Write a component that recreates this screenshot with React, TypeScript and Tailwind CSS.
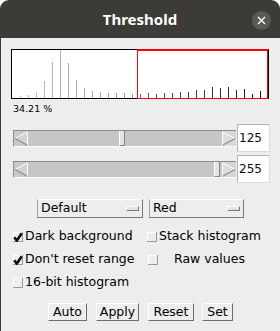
import React from "react";

const FONT = { fontFamily: '"DejaVu Sans", "Liberation Sans", sans-serif' };

const bars: [number, number][] = [
  [20, 96], [28, 95], [36, 92], [44, 81], [52, 62], [60, 50], [68, 63], [76, 80],
  [84, 88], [92, 91], [100, 92], [108, 93], [116, 93], [124, 93], [132, 94],
  [140, 94], [148, 93], [156, 94], [164, 93], [172, 93], [180, 92], [188, 92],
  [196, 90], [204, 90], [212, 87], [220, 88], [228, 87], [236, 90], [244, 89],
  [252, 94], [260, 91],
];

function barColor(x: number) {
  const v = x < 137 ? Math.round(192 - (x - 20) * 0.35) : Math.round(95 - (x - 140) * 0.6);
  return `rgb(${v},${v},${v})`;
}

function Histogram() {
  return (
    <svg width={258} height={50} className="block">
      <rect x={0.5} y={0.5} width={257} height={49} fill="#fff" stroke="#000" />
      {bars.map(([x, top]) => (
        <rect key={x} x={x - 11} y={top - 49} width={1} height={98 - top} fill={barColor(x)} />
      ))}
      <rect x={126.5} y={0.5} width={130} height={49} fill="none" stroke="#ff0000" />
      <line x1={126} y1={1.5} x2={257} y2={1.5} stroke="#ff0000" />
    </svg>
  );
}

function LeftArrow() {
  return (
    <svg width={14} height={15} className="block shrink-0">
      <rect x={0} y={0} width={14} height={15} fill="#c8c8c8" />
      <polygon points="1,7.5 13,1 13,14" fill="#d2d2d2" />
      <line x1={1} y1={7.5} x2={13} y2={1} stroke="#ffffff" />
      <line x1={1} y1={7.5} x2={13} y2={14} stroke="#7c7c7c" />
      <line x1={13.5} y1={1} x2={13.5} y2={14} stroke="#ffffff" />
    </svg>
  );
}

function RightArrow() {
  return (
    <svg width={14} height={15} className="block shrink-0">
      <rect x={0} y={0} width={14} height={15} fill="#d6d6d6" />
      <polygon points="13,7.5 1,1 1,14" fill="#dcdcdc" />
      <line x1={13} y1={7.5} x2={1} y2={1} stroke="#ffffff" />
      <line x1={13} y1={7.5} x2={1} y2={14} stroke="#7c7c7c" />
      <line x1={0.5} y1={1} x2={0.5} y2={14} stroke="#ffffff" />
    </svg>
  );
}

function Slider({ thumb, value }: { thumb: number; value: string }) {
  return (
    <div className="flex items-center h-[28px] ml-[12px]">
      <div className="relative flex w-[223px] h-[17px] bg-[#c6c6c6] border-t border-l border-t-[#8c8c8c] border-l-[#8c8c8c] border-b border-b-white">
        <LeftArrow />
        <div className="flex-1" />
        <RightArrow />
        <div
          className="absolute top-0 w-[6px] h-[15px] bg-[#e4e4e4] border-l border-l-white border-r border-r-[#858585] border-b border-b-[#858585]"
          style={{ left: thumb }}
        />
      </div>
      <div className="ml-[1px] w-[33px] h-[28px] bg-white border border-t-[#b4b4b4] border-l-[#b4b4b4] border-r-[#dcdcdc] border-b-[#dcdcdc] flex items-center pl-[1px] text-[12px] text-[#0a0a28]">
        {value}
      </div>
    </div>
  );
}

function Choice({ label, width }: { label: string; width: number }) {
  return (
    <div
      className="h-[19px] flex items-center justify-between pl-[3px] pr-[3px] border border-t-white border-l-[#a6a6a6] border-b-[#7a7a7a] border-r-[#7a7a7a] text-[12.5px] text-black"
      style={{ width }}
    >
      <span>{label}</span>
      <span className="w-[13px] h-[5px] border border-t-white border-l-white border-b-[#7a7a7a] border-r-[#7a7a7a] bg-[#e2e2e2]" />
    </div>
  );
}

function Box({ checked }: { checked: boolean }) {
  return (
    <svg width={10} height={10} className="block shrink-0">
      <rect x={0} y={0} width={10} height={10} fill="#ededed" />
      <line x1={0.5} y1={0} x2={0.5} y2={10} stroke="#ffffff" />
      <line x1={0} y1={0.5} x2={10} y2={0.5} stroke="#ffffff" />
      <line x1={9.5} y1={0} x2={9.5} y2={10} stroke="#9a9a9a" />
      <line x1={0} y1={9.5} x2={10} y2={9.5} stroke="#9a9a9a" />
      {checked && (
        <path d="M1.2 5.2 L3.8 8.6 L8.8 1.2" fill="none" stroke="#111" strokeWidth={2.6} strokeLinejoin="miter" />
      )}
    </svg>
  );
}

function Check({ label, checked, gap = 2 }: { label: string; checked: boolean; gap?: number }) {
  return (
    <div className="flex items-center">
      <Box checked={checked} />
      <span className="text-[12.5px] text-black whitespace-pre" style={{ marginLeft: gap }}>
        {label}
      </span>
    </div>
  );
}

function Btn({ label, width }: { label: string; width: number }) {
  return (
    <div
      className="h-[18px] flex items-center justify-center border border-t-white border-l-white border-b-[#6e6e6e] border-r-[#6e6e6e] text-[12.5px] text-black"
      style={{ width }}
    >
      {label}
    </div>
  );
}

export default function App() {
  return (
    <div className="w-[280px] h-[331px] overflow-hidden bg-white" style={FONT}>
      <div className="h-[38px] bg-[#3c3b37] rounded-t-[9px] flex items-center justify-center relative">
        <span
          className="text-white font-bold text-[15px]"
          style={{ fontFamily: '"Noto Sans", "DejaVu Sans", sans-serif' }}
        >
          Threshold
        </span>
        <div className="absolute left-[252px] top-[11px] w-[19px] h-[19px] rounded-full bg-[#5a5955] flex items-center justify-center">
          <svg width={9} height={9}>
            <path d="M1 1 L8 8 M8 1 L1 8" stroke="#ffffff" strokeWidth={1.4} />
          </svg>
        </div>
      </div>
      <div className="h-[293px] bg-[#ededed] border-l border-l-[#3c3b37] flex flex-col">
        <div className="mt-[11px] ml-[10px]">
          <Histogram />
        </div>
        <div className="h-[25px] pl-[12px] pt-[4px] text-[9.5px] leading-[11px] text-black">34.21 %</div>
        <Slider thumb={105} value="125" />
        <div className="mt-[3px]">
          <Slider thumb={200} value="255" />
        </div>
        <div className="mt-[16px] ml-[36px] flex gap-[6px]">
          <Choice label="Default" width={106} />
          <Choice label="Red" width={95} />
        </div>
        <div className="mt-[7px] ml-[12px] flex flex-col">
          <div className="h-[23px] flex items-center">
            <div className="w-[134px]">
              <Check label="Dark background" checked={true} />
            </div>
            <Check label="Stack histogram" checked={false} />
          </div>
          <div className="h-[23px] flex items-center">
            <div className="w-[135px]">
              <Check label="Don't reset range" checked={true} />
            </div>
            <Check label="Raw values" checked={false} gap={16} />
          </div>
          <div className="h-[23px] flex items-center">
            <Check label="16-bit histogram" checked={false} />
          </div>
        </div>
        <div className="mt-[9px] ml-[47px] flex">
          <Btn label="Auto" width={39} />
          <div className="w-[9px]" />
          <Btn label="Apply" width={43} />
          <div className="w-[9px]" />
          <Btn label="Reset" width={46} />
          <div className="w-[8px]" />
          <Btn label="Set" width={31} />
        </div>
      </div>
    </div>
  );
}
